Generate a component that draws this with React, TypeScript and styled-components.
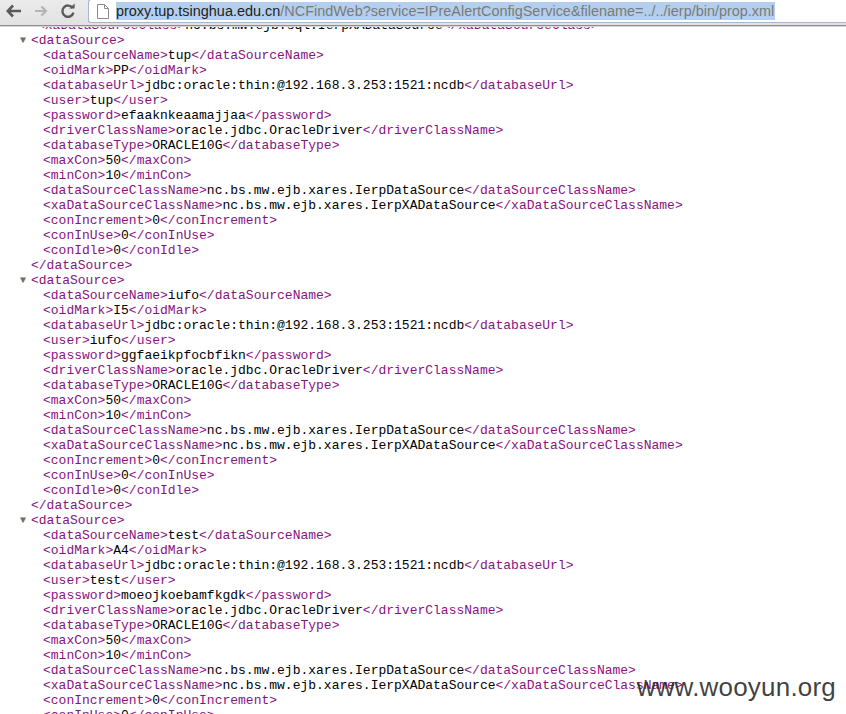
import React from "react";
import styled, {createGlobalStyle} from "styled-components";

const GlobalStyle = createGlobalStyle`
  html, body {
    margin: 0;
    padding: 0;
    background: #ffffff;
  }
`

const Page = styled.div`
  position: relative;
  width: 846px;
  height: 714px;
  overflow: hidden;
  display: flex;
  flex-direction: column;
  background: #ffffff;
`

const Toolbar = styled.div`
  position: relative;
  z-index: 1;
  height: 25px;
  flex: none;
  display: flex;
  align-items: flex-start;
  background: linear-gradient(#ebebeb, #e2e2e2);
  border-bottom: 1px solid #8e8e8e;
  box-shadow: 0 1px 0 #d6d6d6;
`

const NavButton = styled.div<{ $dim?: boolean }>`
  width: 26px;
  height: 22px;
  display: flex;
  align-items: center;
  justify-content: center;
  color: ${props => props.$dim ? '#b4b4b4' : '#5a5a5a'};
`

const NavGroup = styled.div`
  display: flex;
  padding-left: 1px;
  gap: 1px;
  width: 87px;
`

const AddressBox = styled.div`
  flex: 1;
  height: 22px;
  margin-top: -1px;
  display: flex;
  align-items: center;
  background: #ffffff;
  border: 1px solid #a7b6cc;
  border-right: none;
  border-radius: 3px 0 0 3px;
  padding-left: 8px;
`

const PageIcon = styled.div`
  width: 14px;
  display: flex;
  align-items: center;
  margin-right: 5px;
`

const Url = styled.span`
  font-family: "Liberation Sans", Arial, sans-serif;
  font-size: 14.45px;
  line-height: 18px;
  background: #b3cfed;
  color: #7a7a7a;
  white-space: nowrap;
  padding-right: 1px;

  b {
    font-weight: normal;
    color: #1e1e1e;
  }
`

const Viewer = styled.div`
  flex: 1;
  overflow: hidden;
`

const Lines = styled.div`
  margin-top: -8px;
  font-family: "Liberation Mono", "Courier New", monospace;
  font-size: 13px;
  line-height: 15px;
  color: #000000;
`

const Line = styled.div<{ $indent: number }>`
  padding-left: ${props => props.$indent}px;
  white-space: pre;
  height: 15px;
`

const Tag = styled.span`
  color: #881280;
`

const Toggle = styled.span`
  display: inline-block;
  width: 11px;
  font-size: 10px;
  color: #6e6e6e;
  vertical-align: top;
`

const Watermark = styled.div`
  position: absolute;
  right: 10px;
  bottom: 12px;
  font-family: "Liberation Sans", Arial, sans-serif;
  font-size: 26px;
  line-height: 30px;
  color: rgba(38, 38, 38, 0.88);
  letter-spacing: 0.2px;
`

const sources = [
  {name: 'tup', oid: 'PP', pwd: 'efaaknkeaamajjaa'},
  {name: 'iufo', oid: 'I5', pwd: 'ggfaeikpfocbfikn'},
  {name: 'test', oid: 'A4', pwd: 'moeojkoebamfkgdk'},
]

const fieldsFor = (s: { name: string, oid: string, pwd: string }): [string, string][] => [
  ['dataSourceName', s.name],
  ['oidMark', s.oid],
  ['databaseUrl', 'jdbc:oracle:thin:@192.168.3.253:1521:ncdb'],
  ['user', s.name],
  ['password', s.pwd],
  ['driverClassName', 'oracle.jdbc.OracleDriver'],
  ['databaseType', 'ORACLE10G'],
  ['maxCon', '50'],
  ['minCon', '10'],
  ['dataSourceClassName', 'nc.bs.mw.ejb.xares.IerpDataSource'],
  ['xaDataSourceClassName', 'nc.bs.mw.ejb.xares.IerpXADataSource'],
  ['conIncrement', '0'],
  ['conInUse', '0'],
  ['conIdle', '0'],
]

const Element: React.FC<{ tag: string, value: string, indent: number }> = ({tag, value, indent}) =>
  <Line $indent={indent}>
    <Tag>{`<${tag}>`}</Tag>{value}<Tag>{`</${tag}>`}</Tag>
  </Line>

const BackIcon = () =>
  <svg width="16" height="14" viewBox="0 0 16 14">
    <path d="M7 1.5 L1.8 7 L7 12.5 M2 7 H15" fill="none" stroke="currentColor" strokeWidth="2.6"
          strokeLinecap="butt" strokeLinejoin="miter"/>
  </svg>

const ForwardIcon = () =>
  <svg width="14" height="12" viewBox="0 0 14 12">
    <path d="M7.5 1.5 L12 6 L7.5 10.5 M12 6 H1" fill="none" stroke="currentColor" strokeWidth="2.2"/>
  </svg>

const ReloadIcon = () =>
  <svg width="16" height="16" viewBox="0 0 16 16">
    <path d="M12.6 5 A5.6 5.6 0 1 0 13.4 9.6" fill="none" stroke="currentColor" strokeWidth="2.4"/>
    <path d="M9.2 5.6 L14.6 5.6 L14.6 0.6 Z" fill="currentColor"/>
  </svg>

const DocIcon = () =>
  <svg width="12" height="15" viewBox="0 0 12 15">
    <path d="M0.5 0.5 H7.5 L11.5 4.5 V14.5 H0.5 Z M7.5 0.5 V4.5 H11.5" fill="#ffffff" stroke="#8a8a8a"
          strokeWidth="1"/>
  </svg>

const App: React.FC = () => {
  return <>
    <GlobalStyle/>
    <Page>
      <Toolbar>
        <NavGroup>
          <NavButton><BackIcon/></NavButton>
          <NavButton $dim><ForwardIcon/></NavButton>
          <NavButton><ReloadIcon/></NavButton>
        </NavGroup>
        <AddressBox>
          <PageIcon><DocIcon/></PageIcon>
          <Url><b>proxy.tup.tsinghua.edu.cn</b>/NCFindWeb?service=IPreAlertConfigService&amp;filename=../../ierp/bin/prop.xml</Url>
        </AddressBox>
      </Toolbar>
      <Viewer>
        <Lines>
          <Element tag="xaDataSourceClass" value="nc.bs.mw.ejb.sql.IerpXADataSource" indent={37}/>
          {
            sources.map(s =>
              <React.Fragment key={s.name}>
                <Line $indent={20}><Toggle>▼</Toggle><Tag>{'<dataSource>'}</Tag></Line>
                {
                  fieldsFor(s).map(([tag, value]) =>
                    <Element key={tag} tag={tag} value={value} indent={43}/>)
                }
                <Line $indent={31}><Tag>{'</dataSource>'}</Tag></Line>
              </React.Fragment>
            )
          }
        </Lines>
      </Viewer>
      <Watermark>www.wooyun.org</Watermark>
    </Page>
  </>
}

export default App
